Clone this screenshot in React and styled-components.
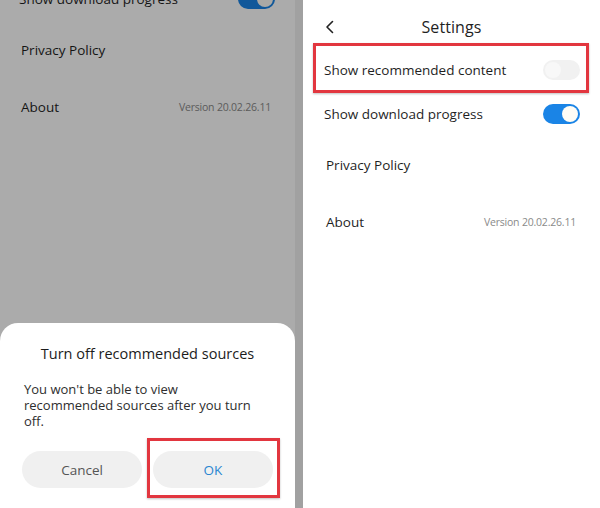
import styled, { createGlobalStyle } from "styled-components";

const Global = createGlobalStyle`
  body {
    margin: 0;
    background: #fff;
  }
`;

const Stage = styled.div`
  display: flex;
  gap: 8px;
  width: 600px;
  height: 508px;
  overflow: hidden;
  background: #a1a1a1;
  font-family: "Open Sans", "Noto Sans", sans-serif;
  color: #1f1f1f;
`;

const Phone = styled.div`
  position: relative;
  flex: ${(props) => (props.$grow ? "1" : "0 0 295px")};
  background: #fff;
  overflow: hidden;
`;

const Screen = styled.div`
  display: flex;
  flex-direction: column;
  margin-top: ${(props) => props.$shift || 0}px;
  margin-left: ${(props) => (props.$shift ? -2 : 0)}px;
`;

const Header = styled.div`
  display: grid;
  grid-template-columns: 1fr auto 1fr;
  align-items: center;
  height: 42px;
  padding-top: 6px;
`;

const Back = styled.div`
  display: flex;
  padding-left: 22px;
  color: #222;
`;

const Title = styled.div`
  font-size: 16px;
  letter-spacing: 0.1px;
`;

const Row = styled.div`
  position: relative;
  display: flex;
  align-items: center;
  justify-content: space-between;
  height: ${(props) => props.$h}px;
  padding: 0 20px 0 ${(props) => props.$indent || 21}px;
  font-size: 13.5px;
`;

const Version = styled.span`
  margin-right: 4px;
  font-size: 10.5px;
  color: #8a8a8a;
  letter-spacing: -0.2px;
`;

const Toggle = styled.div`
  display: flex;
  justify-content: ${(props) => (props.$on ? "flex-end" : "flex-start")};
  width: 37px;
  height: 20px;
  padding: 2px;
  box-sizing: border-box;
  border-radius: 10px;
  background: ${(props) => (props.$on ? "#1a84e6" : "#f1f1f1")};

  &::after {
    content: "";
    width: 16px;
    height: 16px;
    border-radius: 50%;
    background: ${(props) => (props.$on ? "#fffdf6" : "#f8f8f8")};
  }
`;

const Mark = styled.div`
  position: absolute;
  top: ${(props) => props.$t}px;
  bottom: ${(props) => props.$b}px;
  left: ${(props) => props.$l}px;
  right: ${(props) => props.$r}px;
  border: 3px solid #e2363f;
  box-shadow: 0 1px 2px rgba(0, 0, 0, 0.25);
  pointer-events: none;
`;

const Dim = styled.div`
  position: absolute;
  inset: 0;
  background: rgba(0, 0, 0, 0.33);
`;

const Sheet = styled.div`
  position: absolute;
  top: 323px;
  left: 0;
  right: 0;
  bottom: 0;
  display: flex;
  flex-direction: column;
  background: #fff;
  border-radius: 18px 18px 0 0;
`;

const SheetTitle = styled.div`
  margin-top: 21px;
  text-align: center;
  font-size: 14.5px;
  line-height: 20px;
  color: #1c1c1c;
`;

const SheetText = styled.p`
  margin: 17px 0 0;
  padding: 0 20px 0 24px;
  font-size: 13px;
  line-height: 16px;
  color: #2e2e2e;
  white-space: nowrap;
`;

const Buttons = styled.div`
  display: flex;
  gap: 11px;
  margin-top: 22px;
  padding: 0 22px;
`;

const ButtonSlot = styled.div`
  position: relative;
  flex: 1;
  display: flex;
`;

const Button = styled.button`
  flex: 1;
  height: 37px;
  border: none;
  border-radius: 19px;
  background: #f0f0f0;
  font-family: inherit;
  font-size: 13.5px;
  color: ${(props) => (props.$primary ? "#2a86d0" : "#555")};
`;

function Chevron() {
  return (
    <svg width="10" height="14" viewBox="0 0 10 14">
      <polyline
        points="7.5,1.5 2,7 7.5,12.5"
        fill="none"
        stroke="currentColor"
        strokeWidth="1.6"
        strokeLinecap="round"
        strokeLinejoin="round"
      />
    </svg>
  );
}

function SettingsScreen({ shift, marked }) {
  return (
    <Screen $shift={shift}>
      <Header>
        <Back>
          <Chevron />
        </Back>
        <Title>Settings</Title>
        <span />
      </Header>
      <Row $h={44}>
        Show recommended content
        <Toggle />
        {marked && <Mark $t={-5} $b={-1} $l={10} $r={11} />}
      </Row>
      <Row $h={44}>
        Show download progress
        <Toggle $on />
      </Row>
      <Row $h={57} $indent={23}>
        Privacy Policy
      </Row>
      <Row $h={57} $indent={23}>
        About
        <Version>Version 20.02.26.11</Version>
      </Row>
    </Screen>
  );
}

export default function App() {
  return (
    <>
      <Global />
      <Stage>
        <Phone>
          <SettingsScreen shift={-115} />
          <Dim />
          <Sheet>
            <SheetTitle>Turn off recommended sources</SheetTitle>
            <SheetText>
              You won't be able to view
              <br />
              recommended sources after you turn
              <br />
              off.
            </SheetText>
            <Buttons>
              <ButtonSlot>
                <Button>Cancel</Button>
              </ButtonSlot>
              <ButtonSlot>
                <Button $primary>OK</Button>
                <Mark $t={-13} $b={-10} $l={-6} $r={-7} />
              </ButtonSlot>
            </Buttons>
          </Sheet>
        </Phone>
        <Phone $grow>
          <SettingsScreen marked />
        </Phone>
      </Stage>
    </>
  );
}
